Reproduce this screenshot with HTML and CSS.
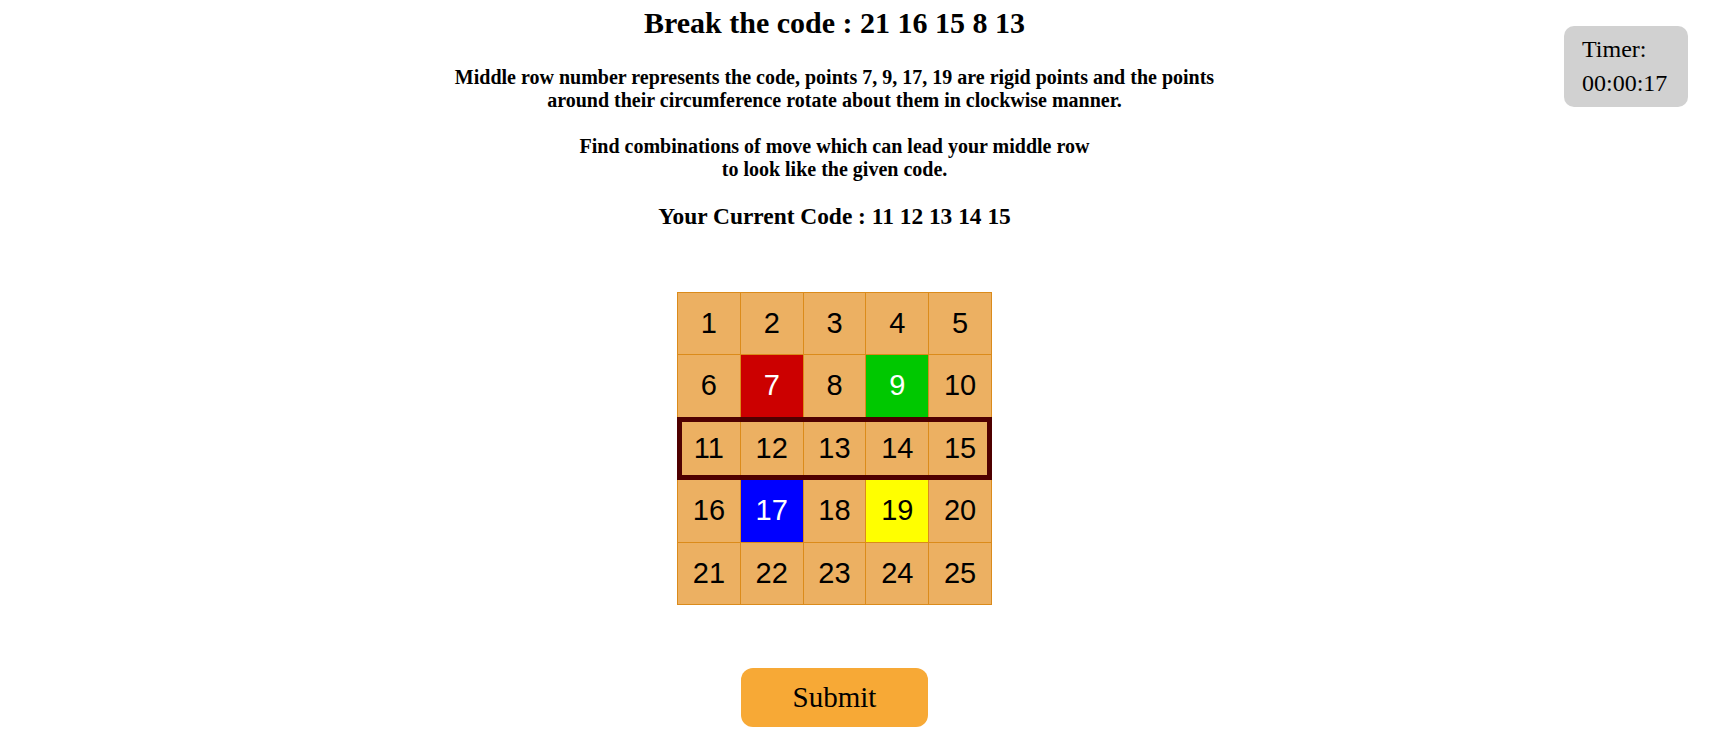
FILE: index.html
```html
<!DOCTYPE html>
<html lang="en">
<head>
<meta charset="utf-8">
<title>Break the code</title>
<link rel="stylesheet" href="styles.css">
</head>
<body>
<div class="timer">
  <div>Timer:</div>
  <div>00:00:17</div>
</div>
<main class="main">
  <h2 class="title">Break the code : 21 16 15 8 13</h2>
  <p class="info">Middle row number represents the code, points 7, 9, 17, 19 are rigid points and the points<br>around their circumference rotate about them in clockwise manner.<br><br>Find combinations of move which can lead your middle row<br>to look like the given code.</p>
  <h3 class="current">Your Current Code : 11 12 13 14 15</h3>
  <div class="board">
    <div class="row">
      <div class="cell">1</div><div class="cell">2</div><div class="cell">3</div><div class="cell">4</div><div class="cell">5</div>
    </div>
    <div class="row">
      <div class="cell">6</div><div class="cell red">7</div><div class="cell">8</div><div class="cell green">9</div><div class="cell">10</div>
    </div>
    <div class="row code">
      <div class="cell">11</div><div class="cell">12</div><div class="cell">13</div><div class="cell">14</div><div class="cell">15</div>
    </div>
    <div class="row">
      <div class="cell">16</div><div class="cell blue">17</div><div class="cell">18</div><div class="cell yellow">19</div><div class="cell">20</div>
    </div>
    <div class="row">
      <div class="cell">21</div><div class="cell">22</div><div class="cell">23</div><div class="cell">24</div><div class="cell">25</div>
    </div>
  </div>
  <button class="submit" type="button">Submit</button>
</main>
</body>
</html>
```
FILE: styles.css
```css
html, body {
  margin: 0;
  padding: 0;
  background: #ffffff;
}

body {
  font-family: "Liberation Serif", "Times New Roman", serif;
  color: #000;
  font-size: 20px;
}

.main {
  display: flex;
  flex-direction: column;
  align-items: center;
  padding: 6px 58px 0 0;
  text-align: center;
}

.title {
  margin: 0;
  font-size: 30px;
  font-weight: bold;
}

.info {
  margin: 26px 0 0;
  font-size: 20px;
  font-weight: bold;
}

.current {
  margin: 22px 0 0;
  font-size: 23.4px;
  font-weight: bold;
}

.board {
  margin-top: 61.5px;
  width: 315px;
  box-sizing: border-box;
  background: #db8b1b;
  padding: 1px;
  display: flex;
  flex-direction: column;
  gap: 1px;
}

.row {
  display: grid;
  grid-template-columns: repeat(5, 1fr);
  gap: 1px;
  height: 61.5px;
}

.row.code {
  outline: 5px solid #4f0000;
  outline-offset: -4px;
}

.cell {
  background: #ecb062;
  display: flex;
  align-items: center;
  justify-content: center;
  font-family: "Liberation Sans", Arial, sans-serif;
  font-size: 29px;
  color: #000;
}

.cell.red { background: #cc0000; color: #fff; }
.cell.green { background: #00c800; color: #fff; }
.cell.blue { background: #0000ff; color: #fff; }
.cell.yellow { background: #ffff00; color: #000; }

.submit {
  margin-top: 63px;
  width: 187px;
  height: 59px;
  border: none;
  border-radius: 12px;
  background: #f7a936;
  font-family: "Liberation Serif", "Times New Roman", serif;
  font-size: 29px;
  color: #000;
  padding: 0;
  cursor: pointer;
}

.timer {
  position: absolute;
  top: 26px;
  right: 39px;
  width: 124px;
  box-sizing: border-box;
  padding: 7px 18px;
  background: #d1d1d1;
  border-radius: 10px;
  font-size: 24px;
  line-height: 1.4;
  text-align: left;
}
```
